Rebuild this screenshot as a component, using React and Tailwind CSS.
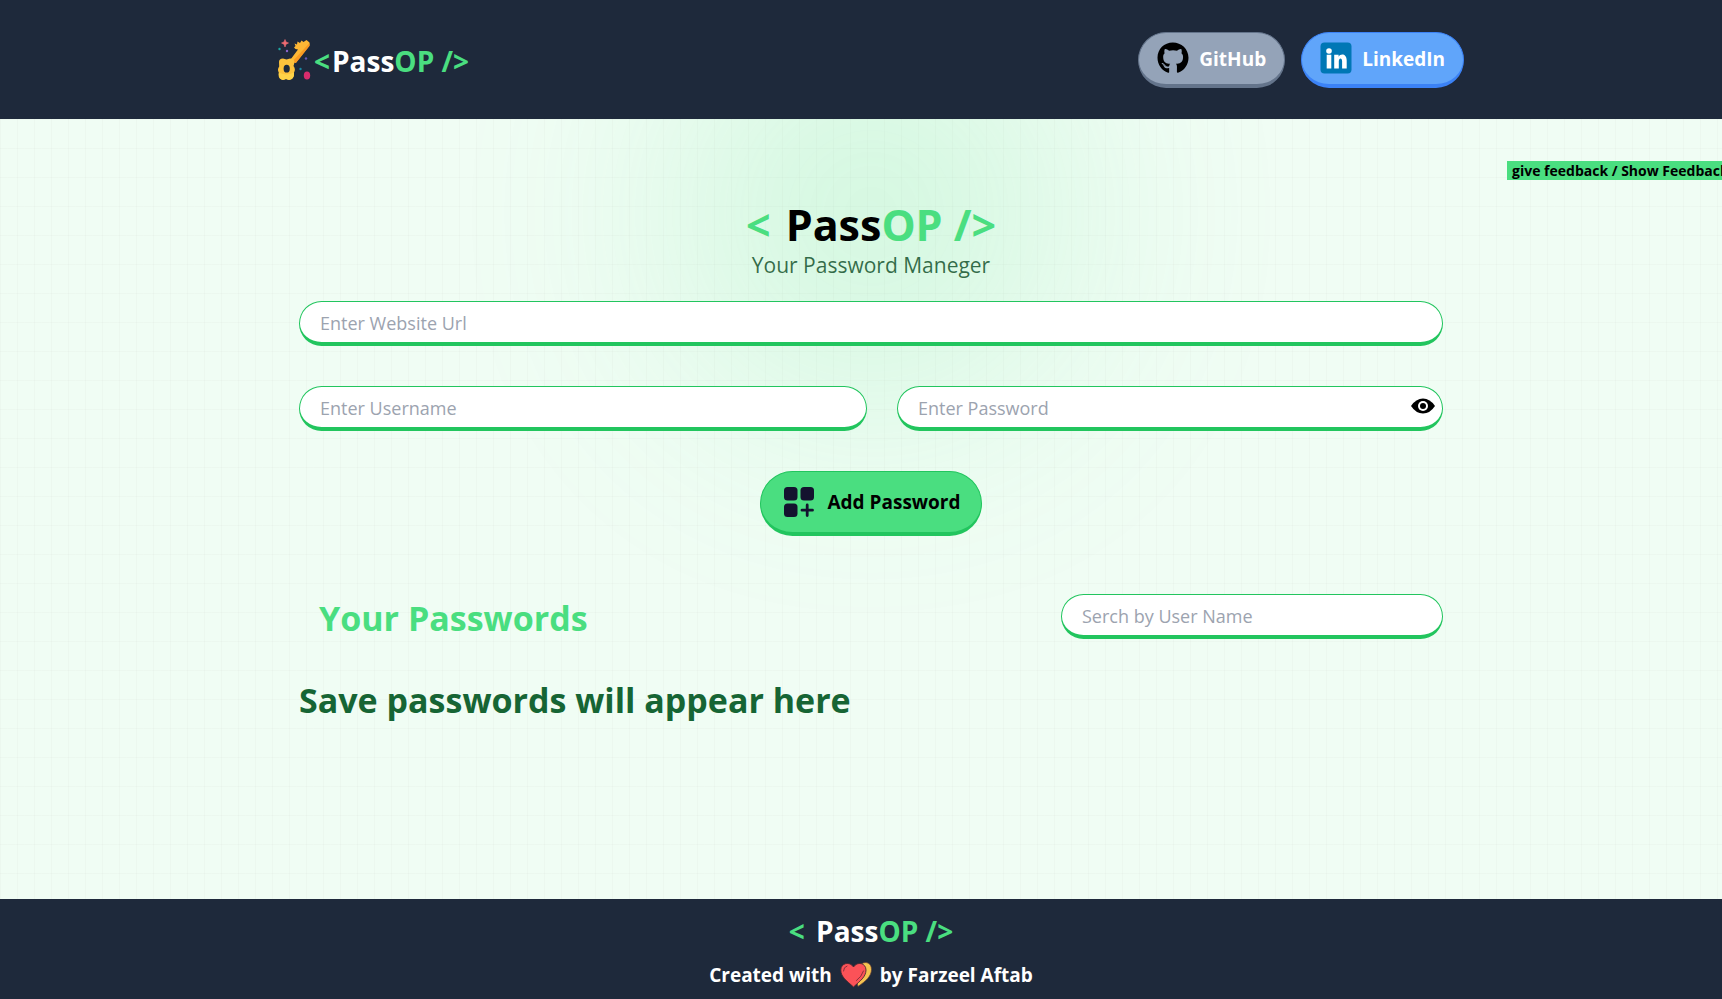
import { FaGithub } from "react-icons/fa";

function Brand({ className, spaced, dark }) {
  return (
    <span className={className}>
      <span className={spaced ? "mr-1 text-[#4ade80]" : "mr-0.5 text-[#4ade80]"}>&lt;{spaced ? " " : ""}</span>
      <span className={dark ? "text-black" : "text-white"}>Pass</span>
      <span className="text-[#4ade80]">OP /&gt;</span>
    </span>
  );
}

function KeyLogo() {
  return (
    <svg viewBox="0 0 36 44" className="h-11 w-9 shrink-0" aria-hidden="true">
      <path d="m28.500 2 3 2.500v3L17.500 25l-5-3.500 7.500-10-2.500-.5-1.500-1.500 1.500-1.500-1-2.500 2.500 1 .5-3 2.500 1.500 1.500-2.500 2 1.500Z" fill="#fdb735" />
      <path d="M31.500 5v3L18 25l-4-1Z" fill="#f99a22" />
      <path d="M1 24q0-3.500 4-3.500l3.500 1 3.500-1q4.500 0 4.500 4l-1 3.500q2.500 3 .5 6.500.5 7-5 7.500l-3-1-3 1Q-.5 41 .8 34.500q-1.800-3 .4-6Z" fill="#fdc23c" />
      <path d="M1 34.500q7 4 15 0 .5 7-5 7.500l-3-1-3 1q-5-1-4-7.500Z" fill="#ffd348" />
      <ellipse cx="8.700" cy="30.700" rx="3.100" ry="3.900" fill="#1e293b" />
      <path d="m7 1.500 1 2.500 2.500 1L8 6.200 7 9 6 6.200 3.500 5 6 4Z" fill="#ee6c72" stroke="#ee6c72" strokeWidth=".6" />
      <ellipse cx="29" cy="37.500" rx="3.200" ry="4" fill="#d92c6c" />
      <circle cx="1.500" cy="11" r="1.200" fill="#1da5a0" />
      <circle cx="9" cy="13" r="1.200" fill="#8a64cc" />
      <circle cx="28" cy="20.500" r="1.200" fill="#6558b5" />
      <circle cx="22.500" cy="31" r="1.200" fill="#1685a0" />
    </svg>
  );
}

function LinkedInIcon() {
  return (
    <svg viewBox="0 0 32 32" className="size-8" aria-hidden="true">
      <rect x=".5" y=".5" width="31" height="31" rx="4" fill="#0077b5" />
      <circle cx="9" cy="9" r="2.800" fill="#fff" />
      <path d="M6.700 12.800h4.600V26.500H6.700zM14.200 12.800h4.400v1.900c1.800-3.400 8.100-3.400 8.100 3.800v8h-4.600v-7.200c0-4-3.300-3.600-3.300 0v7.200h-4.600z" fill="#fff" />
    </svg>
  );
}

function EyeIcon() {
  return (
    <svg viewBox="0 0 24 18" className="h-[18px] w-6" aria-hidden="true">
      <path d="M0 9Q5 1.500 12 1.500T24 9q-5 7.500-12 7.500T0 9Z" />
      <circle cx="12" cy="9" r="5" fill="#fff" />
      <circle cx="12" cy="9" r="3" />
    </svg>
  );
}

function AddIcon() {
  return (
    <svg viewBox="0 0 32 32" className="size-8" fill="#14132f" aria-hidden="true">
      <rect x="1" y="1" width="13.500" height="13.500" rx="3.500" />
      <rect x="17.500" y="1" width="13.500" height="13.500" rx="3.500" />
      <rect x="1" y="17.500" width="13.500" height="13.500" rx="3.500" />
      <path d="M24.200 19v10.500M19 24.200h10.500" stroke="#14132f" strokeWidth="2.800" strokeLinecap="round" />
    </svg>
  );
}

function HeartIcon() {
  return (
    <svg viewBox="0 0 32 26" className="h-[26px] w-8" aria-hidden="true">
      <path d="M18 24.500C26 19 31.500 14 31.500 7.500c0-6-5-8.500-9.500-6L14 10Z" fill="#f5c451" stroke="#5b3a35" strokeWidth=".7" />
      <path d="M13.500 25C7 19 .8 15 .8 8c0-7 9-9 12.700-3 3.800-6 12.500-4 12.500 3 0 7-6 11-12.500 17Z" fill="#fb5258" stroke="#4b2830" strokeWidth=".9" />
      <path d="M3.500 9q0-4 3.500-5M23.500 9q-2 6-7 9.500" fill="none" stroke="#6b2834" strokeWidth=".8" strokeLinecap="round" />
    </svg>
  );
}

function Field({ label, type = "text", padding = "px-5" }) {
  return (
    <input
      type={type}
      aria-label={label}
      placeholder={label}
      className={`h-[45px] w-full rounded-full border border-b-4 border-[#22c55e] bg-white pt-0.5 text-[18px] leading-7 text-black outline-none placeholder:text-[#9ca3af] ${padding}`}
    />
  );
}

export default function App() {
  return (
    <div className="flex min-h-screen flex-col overflow-x-hidden bg-[#f0fdf4] font-['Open_Sans','Noto_Sans',sans-serif]">
      <header className="bg-[#1e293b] pl-5">
        <div className="mx-auto flex h-[119px] max-w-[1186px] items-center justify-between">
          <a href="#" className="flex items-center">
            <KeyLogo />
            <Brand className="pt-0.5 text-[28px] leading-8 font-bold" />
          </a>
          <nav className="flex gap-4 text-[19px] font-bold text-white">
            <a href="#github" className="flex h-14 items-center gap-2.5 rounded-full border border-b-4 border-[#64748b] bg-[#94a3b8] px-[18px]">
              <FaGithub className="size-8 text-black" />
              <span className="pt-0.5">GitHub</span>
            </a>
            <a href="#linkedin" className="flex h-14 items-center gap-2.5 rounded-full border border-b-4 border-[#3b82f6] bg-[#60a5fa] px-[18px]">
              <LinkedInIcon />
              <span className="pt-0.5">LinkedIn</span>
            </a>
          </nav>
        </div>
      </header>

      <main className="relative isolate flex-1 overflow-hidden pl-5">
        <div className="absolute inset-0 -z-20 bg-[linear-gradient(to_right,#8080800a_1px,transparent_1px),linear-gradient(to_bottom,#8080800a_1px,transparent_1px)] bg-[size:17px_29px]" />
        <div className="absolute right-0 left-5 -top-24 -z-10 mx-auto size-[380px] rounded-full bg-[#4ade80] opacity-20 blur-[120px]" />
        <a href="#feedback" className="absolute top-[42px] left-[calc(100%-215px)] bg-[#4ade80] px-[5px] text-[14px] leading-[19px] font-bold whitespace-nowrap text-black">
          give feedback / Show Feedback
        </a>

        <div className="mx-auto max-w-[1144px] pt-20">
          <div className="text-center">
            <h1>
              <Brand className="text-[43px] leading-[52px] font-bold" spaced dark />
            </h1>
            <p className="text-[21px] leading-7 text-[#14532d]/85">Your Password Maneger</p>
          </div>
          <form className="mt-[22px] flex flex-col" onSubmit={(e) => e.preventDefault()}>
            <Field label="Enter Website Url" />
            <div className="mt-10 flex gap-[30px]">
              <div className="w-[568px]">
                <Field label="Enter Username" />
              </div>
              <div className="relative flex-1">
                <Field label="Enter Password" type="password" padding="pr-12 pl-5" />
                <button type="button" aria-label="Show password" className="absolute top-[11px] right-2">
                  <EyeIcon />
                </button>
              </div>
            </div>
            <button type="submit" className="mt-10 flex h-[65px] items-center gap-3 self-center rounded-full border border-b-4 border-[#22c55e] bg-[#4ade80] pr-5 pl-[22px] text-[19px] font-bold text-black">
              <AddIcon />
              Add Password
            </button>
          </form>

          <div className="mt-[58px] flex items-start justify-between">
            <h2 className="pt-0.5 pl-5 text-[34px] leading-[44px] font-bold text-[#4ade80]">Your Passwords</h2>
            <div className="w-[382px]">
              <Field label="Serch by User Name" />
            </div>
          </div>
          <p className="mt-[38px] text-[34px] leading-[44px] font-bold text-[#166534]">Save passwords will appear here</p>
        </div>
      </main>

      <footer className="flex h-[100px] flex-col items-center bg-[#1e293b] pt-4 pl-5 font-bold text-white">
        <Brand className="text-[28px] leading-8" spaced />
        <p className="mt-3.5 flex items-center gap-2 text-[19px] leading-7">
          Created with
          <HeartIcon />
          by Farzeel Aftab
        </p>
      </footer>
    </div>
  );
}
